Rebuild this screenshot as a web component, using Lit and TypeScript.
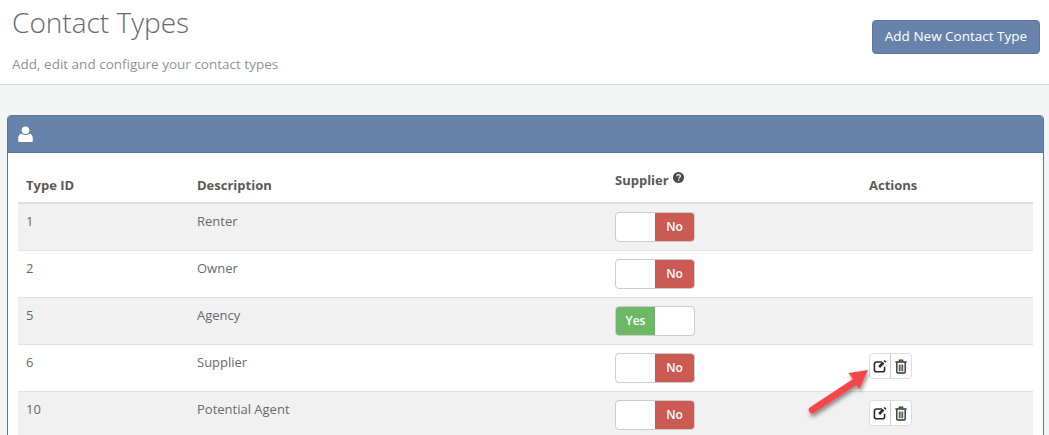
import { LitElement, html, css, svg } from "lit";
import { customElement } from "lit/decorators.js";

const rows = [
  { id: "1", d: "Renter", yes: false, act: false },
  { id: "2", d: "Owner", yes: false, act: false },
  { id: "5", d: "Agency", yes: true, act: false },
  { id: "6", d: "Supplier", yes: false, act: true },
  { id: "10", d: "Potential Agent", yes: false, act: true },
];

const editIcon = svg`<svg width="15" height="14" viewBox="0 0 15 14"><path d="M9 3H3.400A2 2 0 0 0 1.400 5v5.700a2 2 0 0 0 2 2h6.200a2 2 0 0 0 2-2V7.800" fill="none" stroke="#2e2828" stroke-width="1.600"/><path d="M5.200 7 7 8.900 11.400 4.500 9.600 2.700z" fill="#2e2828"/><path d="M10.600 2 11.700 .9 13.500 2.700 12.400 3.800z" fill="#2e2828"/></svg>`;
const trashIcon = svg`<svg width="12" height="15" viewBox="0 0 12 15"><path d="M4.400 2.500V1.200h3.200v1.300" fill="none" stroke="#2a3a28" stroke-width="1.300"/><path d="M.4 3h11.200" stroke="#2a3a28" stroke-width="1.500"/><path d="M1.800 3.500v9.600a.9.9 0 0 0 .9.900h6.600a.9.9 0 0 0 .9-.9V3.500" fill="none" stroke="#2a3a28" stroke-width="1.400"/><path d="M4.300 5.500v6.800M6 5.500v6.800M7.700 5.500v6.800" stroke="#2a3a28" stroke-width="1"/></svg>`;

@customElement("app-root")
export class AppRoot extends LitElement {
  static styles = css`
    :host {
      display: block;
      position: relative;
      height: 435px;
      overflow: hidden;
      background: #f3f5f5;
      font-family: "Open Sans", sans-serif;
      font-size: 13px;
      color: #676a6c;
    }
    .top {
      height: 84px;
      background: #fff;
      border-bottom: 1px solid #d6d8d8;
      display: flex;
      justify-content: space-between;
      padding: 0 9px 0 12px;
    }
    h1 {
      margin: 3px 0 0;
      font-size: 28px;
      line-height: 38px;
      font-weight: 300;
      color: #676a6c;
    }
    .sub {
      margin: 14px 0 0;
      font-size: 13.500px;
      line-height: 19px;
      color: #8f9294;
    }
    .add {
      margin-top: 20px;
      height: 34px;
      width: 168px;
      box-sizing: border-box;
      border: 1px solid #5b77a1;
      border-radius: 4px;
      background: #6783ab;
      color: #fff;
      font: 13.500px/1 "Open Sans", sans-serif;
      padding: 0;
    }
    .panel {
      margin: 30px 5px 0 7px;
      background: #fff;
      border: 1px solid #5b77a3;
      border-radius: 4px 4px 0 0;
    }
    .head {
      height: 36px;
      background: #6783ab;
      border-bottom: 1px solid #5b77a3;
      border-radius: 3px 3px 0 0;
      display: flex;
      align-items: center;
      padding-left: 10px;
    }
    .body {
      padding: 0 10px;
    }
    .row {
      display: grid;
      grid-template-columns: 171px 418px 254px 1fr;
      height: 46px;
      border-bottom: 1px solid #e2e2e2;
    }
    .row:nth-child(even) {
      background: #f1f1f1;
    }
    .row > div {
      padding: 8px 8px 0;
      line-height: 18px;
    }
    .th {
      height: 49px;
      border-bottom: 2px solid #dedede;
      font-weight: 700;
      color: #5c5a58;
    }
    .row.th > div {
      padding-top: 23px;
    }
    .row.th > div.sup {
      padding-top: 18px;
      display: flex;
      align-items: flex-start;
      gap: 4px;
    }
    .q {
      margin-top: 1px;
    }
    .toggle {
      display: flex;
      width: 80px;
      height: 30px;
      box-sizing: border-box;
      border: 1px solid #ccc;
      border-radius: 4px;
      background: #fff;
      overflow: hidden;
      font-size: 12px;
      font-weight: 600;
      color: #fff;
    }
    .toggle span {
      flex: 1;
      display: flex;
      align-items: center;
      justify-content: center;
    }
    .no { background: #cb5a52; }
    .yes { background: #6cb865; }
    .actions {
      display: flex;
      width: 43px;
      height: 26px;
      box-sizing: border-box;
      border: 1px solid #ddd;
      border-radius: 4px;
      background: #fff;
    }
    .actions span {
      flex: 1;
      display: flex;
      align-items: center;
      justify-content: center;
    }
    .actions span + span {
      border-left: 1px solid #ccc;
    }
    .arrow {
      position: absolute;
      left: 800px;
      top: 355px;
    }
  `;

  render() {
    return html`
      <div class="top">
        <div>
          <h1>Contact Types</h1>
          <p class="sub">Add, edit and configure your contact types</p>
        </div>
        <button class="add">Add New Contact Type</button>
      </div>
      <div class="panel">
        <div class="head">
          <svg width="16" height="17" viewBox="0 0 16 17">
            <circle cx="7.500" cy="4.300" r="3.800" fill="#fff" />
            <path d="M0.200 12.500c0-2.800 1.600-4.800 3.500-4.800 1 .9 2.300 1.400 3.800 1.400s2.800-.5 3.800-1.400c1.900 0 3.500 2 3.500 4.800v2a1.500 1.500 0 0 1-1.500 1.500H1.700a1.500 1.500 0 0 1-1.500-1.500z" fill="#fff" />
          </svg>
        </div>
        <div class="body">
          <div class="row th">
            <div>Type ID</div>
            <div>Description</div>
            <div class="sup">Supplier
              <svg class="q" width="11" height="11" viewBox="0 0 11 11">
                <circle cx="5.500" cy="5.500" r="5.500" fill="#4a4a4a" />
                <path d="M3.700 4.200c.1-1 .9-1.600 1.900-1.600s1.800.6 1.800 1.500c0 1.300-1.600 1.300-1.600 2.500" fill="none" stroke="#fff" stroke-width="1.200" />
                <rect x="5" y="7.500" width="1.300" height="1.300" fill="#fff" />
              </svg>
            </div>
            <div>Actions</div>
          </div>
          ${rows.map(
            (r) => html`
              <div class="row">
                <div>${r.id}</div>
                <div>${r.d}</div>
                <div>
                  <div class="toggle">
                    ${r.yes
                      ? html`<span class="yes">Yes</span><span></span>`
                      : html`<span></span><span class="no">No</span>`}
                  </div>
                </div>
                <div>
                  ${r.act
                    ? html`<div class="actions"><span>${editIcon}</span><span>${trashIcon}</span></div>`
                    : ""}
                </div>
              </div>
            `
          )}
        </div>
      </div>
      <svg class="arrow" width="80" height="70" viewBox="0 0 80 70">
        <defs>
          <filter id="s" x="-20%" y="-20%" width="150%" height="150%">
            <feDropShadow dx="1" dy="3" stdDeviation="2" flood-color="#000" flood-opacity="0.45" />
          </filter>
        </defs>
        <path filter="url(#s)" fill="#f4474c" d="M68 15 L48.500 18 L53 24 L10.500 52 A2.800 2.800 0 0 0 14 58 L56.500 30 L59.500 34 Z" />
      </svg>
    `;
  }
}
